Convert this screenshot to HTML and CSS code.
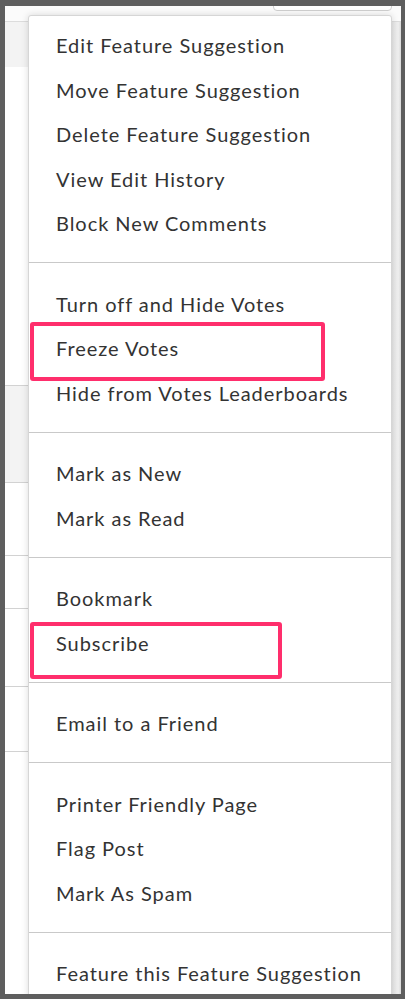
FILE: index.html
```html
<!DOCTYPE html>
<html lang="en">
<head>
<meta charset="utf-8">
<title>Feature Suggestion Options</title>
<link rel="stylesheet" href="styles.css">
</head>
<body>
<div class="screen">
  <div class="page">
    <div class="topbar"><div class="topbtn"></div></div>
    <div class="content">
      <div class="main">
        <div class="row row-gray r1"></div>
        <div class="row r2"></div>
        <div class="row row-gray lined r3"></div>
        <div class="row lined r4"></div>
        <div class="row lined r5"></div>
        <div class="row lined r6"></div>
        <div class="row lined r7"></div>
        <div class="row lined r8"></div>
      </div>
      <div class="side"></div>
    </div>
  </div>

  <div class="menu">
    <ul class="group group-first">
      <li class="item">Edit Feature Suggestion</li>
      <li class="item">Move Feature Suggestion</li>
      <li class="item">Delete Feature Suggestion</li>
      <li class="item">View Edit History</li>
      <li class="item">Block New Comments</li>
    </ul>
    <ul class="group">
      <li class="item">Turn off and Hide Votes</li>
      <li class="item">Freeze Votes</li>
      <li class="item">Hide from Votes Leaderboards</li>
    </ul>
    <ul class="group">
      <li class="item">Mark as New</li>
      <li class="item">Mark as Read</li>
    </ul>
    <ul class="group">
      <li class="item">Bookmark</li>
      <li class="item">Subscribe</li>
    </ul>
    <ul class="group">
      <li class="item">Email to a Friend</li>
    </ul>
    <ul class="group">
      <li class="item">Printer Friendly Page</li>
      <li class="item">Flag Post</li>
      <li class="item">Mark As Spam</li>
    </ul>
    <ul class="group">
      <li class="item">Feature this Feature Suggestion</li>
    </ul>
  </div>

  <div class="mark mark-freeze"></div>
  <div class="mark mark-subscribe"></div>
</div>
</body>
</html>
```

FILE: styles.css
```css
html, body {
  margin: 0;
  padding: 0;
}

body {
  background: #5e5e5e;
  font-family: "Lato", "Liberation Sans", sans-serif;
}

.screen {
  position: relative;
  margin: 6px 0 0 5px;
  width: 396px;
  height: 988px;
  overflow: hidden;
  background: #ffffff;
}

.page {
  display: flex;
  flex-direction: column;
  height: 100%;
}

.topbar {
  height: 5px;
  border-bottom: 1px solid #dcdcdc;
  background: #fbfbfb;
  display: flex;
  justify-content: flex-end;
  align-items: flex-end;
  padding: 0 9px 10px 0;
  box-sizing: content-box;
  overflow: hidden;
}

.topbtn {
  width: 119px;
  height: 20px;
  flex: none;
  border: 1px solid #cfcfcf;
  border-radius: 4px;
  box-sizing: border-box;
  background: #ffffff;
}

.content {
  flex: 1;
  display: flex;
}

.main {
  flex: 1;
  display: flex;
  flex-direction: column;
}

.row {
  flex: none;
  background: #ffffff;
}

.row-gray {
  background: #f3f3f3;
}

.lined {
  border-top: 1px solid #d2d2d2;
}

.r1 { height: 45px; }
.r2 { height: 318px; }
.r3 { height: 96px; }
.r4 { height: 72px; }
.r5 { height: 52px; }
.r6 { height: 77px; }
.r7 { height: 64px; }
.r8 { flex: 1; }

.side {
  width: 9px;
  flex: none;
  background: linear-gradient(to right, #e6e6e6, #efefef 70%, #d9d9d9);
}

.menu {
  position: absolute;
  left: 23px;
  top: 9px;
  bottom: -20px;
  width: 364px;
  box-sizing: border-box;
  background: #ffffff;
  border: 1px solid #d6d6d6;
  border-radius: 3px;
  box-shadow: 0 0 7px rgba(0, 0, 0, 0.14);
}

.group {
  list-style: none;
  margin: 0;
  padding: 18.5px 0 16.5px;
  border-top: 1px solid #c9c9c9;
}

.group-first {
  padding-top: 7px;
  border-top: none;
}

.item {
  height: 44.5px;
  line-height: 44.5px;
  padding-left: 27px;
  font-size: 20px;
  letter-spacing: 0.95px;
  color: #333333;
  white-space: nowrap;
}

.mark {
  position: absolute;
  left: 25px;
  box-sizing: border-box;
  border: 4px solid #ff2e6c;
  border-radius: 3px;
}

.mark-freeze {
  top: 316px;
  width: 295px;
  height: 59px;
}

.mark-subscribe {
  top: 616px;
  width: 252px;
  height: 57px;
}
```
